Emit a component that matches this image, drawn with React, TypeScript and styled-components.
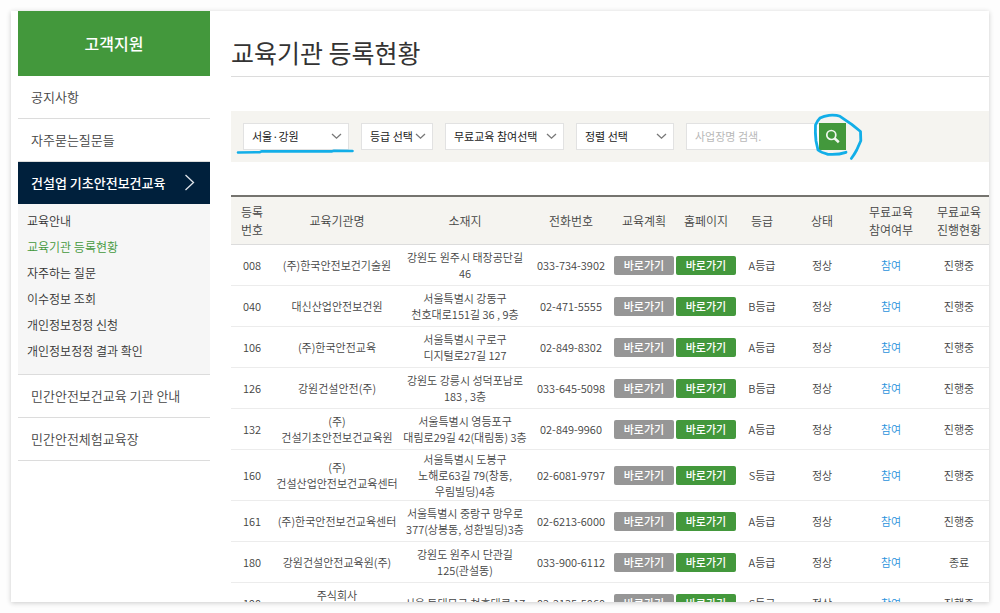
import React from "react";
import styled, { createGlobalStyle } from "styled-components";

const GlobalStyle = createGlobalStyle`
  *, *::before, *::after { box-sizing: border-box; }
  body {
    margin: 0;
    background: #fdfdfd;
    color: #444;
    font-family: "Noto Sans CJK KR", "Noto Sans", sans-serif;
    font-size: 11px;
  }
  button, input, select { font: inherit; }
  a { color: inherit; text-decoration: none; }
`;

const Card = styled.div`
  display: flex;
  align-items: flex-start;
  gap: 21px;
  height: calc(100vh - 22px);
  margin: 11px;
  padding-left: 7px;
  overflow: hidden;
  background: #fff;
  box-shadow: 0 1px 5px rgba(0, 0, 0, 0.2);
`;

const Sidebar = styled.nav`
  flex: 0 0 192px;
`;

const SidebarTitle = styled.h2`
  display: flex;
  align-items: center;
  justify-content: center;
  height: 65px;
  margin: 0;
  padding-bottom: 2px;
  background: #43983c;
  color: #fff;
  font-size: 16px;
  font-weight: 500;
`;

const MenuLink = styled.a<{ $active?: boolean }>`
  display: flex;
  align-items: center;
  justify-content: space-between;
  height: ${(p) => (p.$active ? 42 : 43)}px;
  padding: 0 15px 2px 13px;
  border-bottom: ${(p) => (p.$active ? "0" : "1px solid #dcdcdc")};
  background: ${(p) => (p.$active ? "#00203c" : "#fff")};
  color: ${(p) => (p.$active ? "#fff" : "#444")};
  font-size: 13px;
  font-weight: ${(p) => (p.$active ? 500 : 350)};
`;

const SubMenu = styled.ul`
  margin: 0;
  padding: 4px 9px 10px;
  border-bottom: 1px solid #dcdcdc;
  background: #f6f6f6;
  list-style: none;
`;

const SubLink = styled.a<{ $current?: boolean }>`
  display: block;
  color: ${(p) => (p.$current ? "#43983c" : "#333")};
  font-size: 12px;
  font-weight: 350;
  line-height: 26px;
`;

const Main = styled.main`
  flex: 1;
  min-width: 0;
`;

const PageTitle = styled.h1`
  display: flex;
  align-items: center;
  height: 66px;
  margin: 0 0 34px;
  padding-top: 16px;
  border-bottom: 1px solid #dcdcdc;
  color: #333;
  font-size: 25px;
  font-weight: 400;
`;

const FilterBar = styled.form`
  display: flex;
  gap: 12px;
  margin-bottom: 33px;
  padding: 12px;
  background: #f5f4f0;
`;

const SelectBox = styled.label<{ $width: number }>`
  position: relative;
  flex: 0 0 ${(p) => p.$width}px;
`;

const Select = styled.select`
  width: 100%;
  height: 27px;
  padding: 0 0 2px 8px;
  border: 1px solid #e2e2e2;
  border-radius: 0;
  background: #fff;
  color: #222;
  appearance: none;
`;

const Chevron = styled.svg`
  position: absolute;
  top: 10px;
  right: 7px;
  pointer-events: none;
`;

const Underline = styled.svg`
  position: absolute;
  top: 24px;
  left: -8px;
  pointer-events: none;
`;

const SearchGroup = styled.div`
  display: flex;
`;

const SearchInput = styled.input`
  width: 133px;
  height: 27px;
  padding: 0 8px 2px;
  border: 1px solid #e2e2e2;
  border-right: 0;
  border-radius: 0;
  &::placeholder { color: #b8b8b8; }
`;

const SearchAction = styled.div`
  position: relative;
`;

const SearchButton = styled.button`
  display: flex;
  align-items: center;
  justify-content: center;
  width: 27px;
  height: 27px;
  padding: 0;
  border: 0;
  background: #43983c;
`;

const Circle = styled.svg`
  position: absolute;
  top: -12px;
  left: -8px;
  pointer-events: none;
`;

const Table = styled.table`
  width: 100%;
  table-layout: fixed;
  border-collapse: separate;
  border-spacing: 0;
  text-align: center;
  white-space: pre-line;
  word-break: keep-all;
`;

const HeadCell = styled.th`
  height: 50px;
  padding: 0;
  border-top: 2px solid #75746f;
  border-bottom: 1px solid #dcdcdc;
  background: #f5f4f0;
  font-size: 12px;
  font-weight: 350;
  line-height: 18px;
  &:last-child { padding-left: 4px; }
`;

const Cell = styled.td`
  height: 41px;
  padding: 1px 0;
  border-bottom: 1px solid #ececec;
  font-weight: 350;
  line-height: 16px;
  &:last-child { padding-left: 4px; }
`;

const GoButton = styled.button<{ $green?: boolean }>`
  display: block;
  width: 60px;
  height: 19px;
  margin: 0 auto;
  padding: 0;
  border: 0;
  border-radius: 2px;
  background: ${(p) => (p.$green ? "#43983c" : "#969696")};
  color: #fff;
  font-weight: 500;
  line-height: 18px;
`;

const Joined = styled.a`
  color: #2b93dc;
`;

const columns: [string, number][] = [
  ["등록\n번호", 42],
  ["교육기관명", 128],
  ["소재지", 128],
  ["전화번호", 84],
  ["교육계획", 62],
  ["홈페이지", 62],
  ["등급", 50],
  ["상태", 70],
  ["무료교육\n참여여부", 68],
  ["무료교육\n진행현황", 64],
];

const rows: string[][] = [
  ["008", "(주)한국안전보건기술원", "강원도 원주시 태장공단길\n46", "033-734-3902", "A등급", "진행중"],
  ["040", "대신산업안전보건원", "서울특별시 강동구\n천호대로151길 36 , 9층", "02-471-5555", "B등급", "진행중"],
  ["106", "(주)한국안전교육", "서울특별시 구로구\n디지털로27길 127", "02-849-8302", "A등급", "진행중"],
  ["126", "강원건설안전(주)", "강원도 강릉시 성덕포남로\n183 , 3층", "033-645-5098", "B등급", "진행중"],
  ["132", "(주)\n건설기초안전보건교육원", "서울특별시 영등포구\n대림로29길 42(대림동) 3층", "02-849-9960", "A등급", "진행중"],
  ["160", "(주)\n건설산업안전보건교육센터", "서울특별시 도봉구\n노해로63길 79(창동,\n우림빌딩)4층", "02-6081-9797", "S등급", "진행중"],
  ["161", "(주)한국안전보건교육센터", "서울특별시 중랑구 망우로\n377(상봉동, 성환빌딩)3층", "02-6213-6000", "A등급", "진행중"],
  ["180", "강원건설안전교육원(주)", "강원도 원주시 단관길\n125(관설동)", "033-900-6112", "A등급", "종료"],
  ["190", "주식회사\n\u00a0", "서울 동대문구 천호대로 17", "02-2135-5060", "S등급", "진행중"],
];

const subItems = ["교육안내", "교육기관 등록현황", "자주하는 질문", "이수정보 조회", "개인정보정정 신청", "개인정보정정 결과 확인"];

function Dropdown({ label, value, width, children }: { label: string; value: string; width: number; children?: React.ReactNode }) {
  return (
    <SelectBox $width={width}>
      <Select aria-label={label} defaultValue={value}>
        <option>{value}</option>
      </Select>
      <Chevron width="11" height="7" viewBox="0 0 11 7" fill="none" stroke="#777" strokeWidth="1.3">
        <path d="M1 1 L5.5 5.2 L10 1" />
      </Chevron>
      {children}
    </SelectBox>
  );
}

export default function App() {
  return (
    <>
      <GlobalStyle />
      <Card>
        <Sidebar>
          <SidebarTitle>고객지원</SidebarTitle>
          <MenuLink href="#">공지사항</MenuLink>
          <MenuLink href="#">자주묻는질문들</MenuLink>
          <MenuLink href="#" $active>
            건설업 기초안전보건교육
            <svg width="11" height="17" viewBox="0 0 11 17" fill="none" stroke="#dfe4ea" strokeWidth="1.3">
              <path d="M1.5 1 L9.5 8.5 L1.5 16" />
            </svg>
          </MenuLink>
          <SubMenu>
            {subItems.map((item, i) => (
              <li key={item}>
                <SubLink href="#" $current={i === 1}>{item}</SubLink>
              </li>
            ))}
          </SubMenu>
          <MenuLink href="#">민간안전보건교육 기관 안내</MenuLink>
          <MenuLink href="#">민간안전체험교육장</MenuLink>
        </Sidebar>
        <Main>
          <PageTitle>교육기관 등록현황</PageTitle>
          <FilterBar onSubmit={(e) => e.preventDefault()}>
            <Dropdown label="지역" value="서울·강원" width={106}>
              <Underline width="120" height="8" viewBox="235 147 120 8" fill="none" stroke="#12aee8" strokeWidth="2.6" strokeLinecap="round" strokeLinejoin="round">
                <path d="M238 152.5 L260 152.2 L261.5 151.4 L331.5 151.4 L334 150.7 L352.5 151" />
              </Underline>
            </Dropdown>
            <Dropdown label="등급" value="등급 선택" width={72} />
            <Dropdown label="무료교육 참여" value="무료교육 참여선택" width={119} />
            <Dropdown label="정렬" value="정렬 선택" width={98} />
            <SearchGroup>
              <SearchInput type="text" aria-label="사업장명 검색" placeholder="사업장명 검색." />
              <SearchAction>
                <SearchButton type="submit" aria-label="검색">
                  <svg width="15" height="15" viewBox="0 0 15 15" fill="none" stroke="#f2f8f1">
                    <circle cx="6.3" cy="6" r="4.5" strokeWidth="1.7" />
                    <path d="M9.5 9.3 L13.8 13.2" strokeWidth="2.5" />
                  </svg>
                </SearchButton>
                <Circle width="54" height="52" viewBox="811 111 54 52" fill="none" stroke="#12aee8" strokeWidth="2.8" strokeLinecap="round" strokeLinejoin="round">
                  <path d="M846 152.3 Q838 155 828 154.3 Q821 152.5 818 150 L816 141 Q815 132 815.5 125 Q817 121 820 118 Q824 116 829 115.3 Q836 114.8 840 116.3 L851.7 124.3 L860.5 131.5 L860.8 140.7 L856.7 150 Q854 155 851.3 158.5" />
                </Circle>
              </SearchAction>
            </SearchGroup>
          </FilterBar>
          <Table>
            <colgroup>
              {columns.map(([name, width]) => (
                <col key={name} width={width} />
              ))}
            </colgroup>
            <thead>
              <tr>
                {columns.map(([name]) => (
                  <HeadCell key={name} scope="col">{name}</HeadCell>
                ))}
              </tr>
            </thead>
            <tbody>
              {rows.map(([no, name, address, phone, grade, progress]) => (
                <tr key={no}>
                  <Cell>{no}</Cell>
                  <Cell>{name}</Cell>
                  <Cell>{address}</Cell>
                  <Cell>{phone}</Cell>
                  <Cell><GoButton type="button">바로가기</GoButton></Cell>
                  <Cell><GoButton type="button" $green>바로가기</GoButton></Cell>
                  <Cell>{grade}</Cell>
                  <Cell>정상</Cell>
                  <Cell><Joined href="#">참여</Joined></Cell>
                  <Cell>{progress}</Cell>
                </tr>
              ))}
            </tbody>
          </Table>
        </Main>
      </Card>
    </>
  );
}
